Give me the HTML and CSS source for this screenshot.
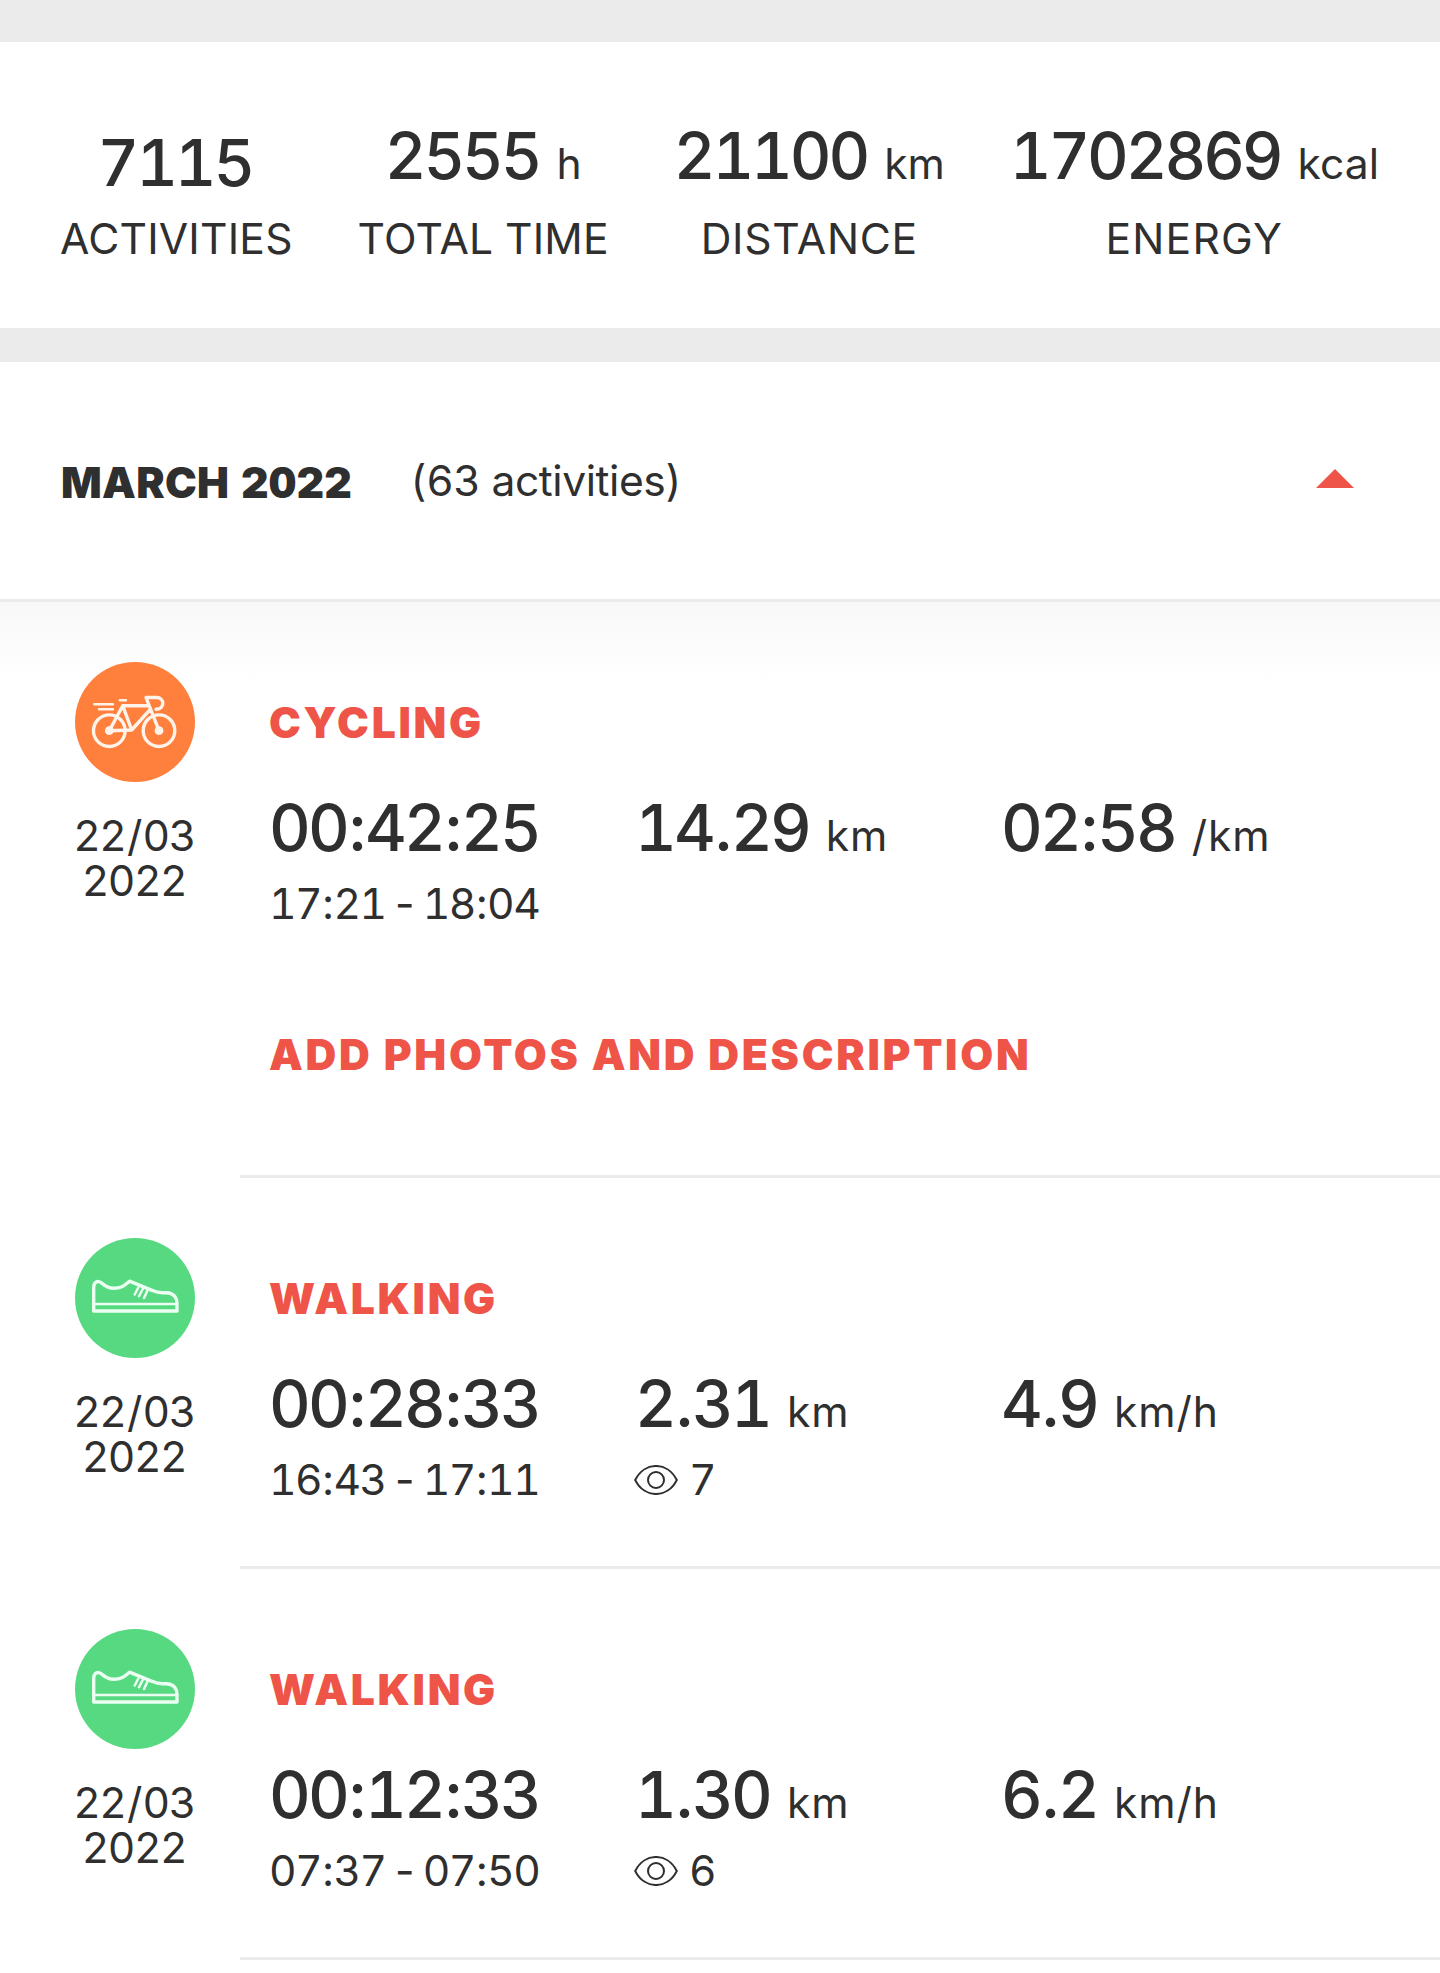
FILE: index.html
```html
<!DOCTYPE html>
<html lang="en">
<head>
<meta charset="utf-8">
<title>Activity history</title>
<link rel="stylesheet" href="styles.css">
</head>
<body>
<svg class="sprite" aria-hidden="true">
  <symbol id="bike" viewBox="0 0 120 120">
    <g fill="none" stroke="#fff3ea" stroke-width="3.4" stroke-linecap="round" stroke-linejoin="round">
      <circle cx="34.3" cy="68.7" r="15.8"/>
      <circle cx="84" cy="68.7" r="15.8"/>
      <path d="M34.3 68.7 47.7 43.7H72.5M47.7 43.7 56.7 68 75 47.6M34.3 68.7 56.7 68M84 68.7 71 35.5H81.5C90 35.5 90 47.3 81 47.3"/>
      <path d="M44.8 38.3H51M19.3 42.3H38M24 47.3H38" stroke-width="2.4"/>
    </g>
    <circle cx="34.3" cy="68.7" r="4.4" fill="#fff3ea"/>
    <circle cx="84" cy="68.7" r="4.4" fill="#fff3ea"/>
  </symbol>
  <symbol id="shoe" viewBox="0 0 120 120">
    <g fill="none" stroke="#eafff1" stroke-width="3.4" stroke-linecap="round" stroke-linejoin="round">
      <path d="M18.7 73V49.5C18.7 45 21 43.3 23.7 43.6C27.5 44 29.5 50.3 38.5 50.3C47.5 50.3 50.5 46.5 54.5 43.2L77 52.3C84.5 55.8 86.5 54.6 91.5 54.7C99.5 55 102 60.5 102 65.5V73Z"/>
      <path d="M18.7 66H102" stroke-width="2.3"/>
      <path d="M63.3 49.5 59.7 56.5M68 50.5 64 58.3M72.5 52.5 69 60" stroke-width="2.5"/>
    </g>
  </symbol>
  <symbol id="eye" viewBox="0 0 44 30">
    <g fill="none" stroke="#2f2f2f" stroke-width="2">
      <path d="M1.2 15C10.5-3.7 33.5-3.7 42.8 15C33.5 33.7 10.5 33.7 1.2 15Z"/>
      <circle cx="22" cy="15" r="8"/>
    </g>
  </symbol>
</svg>

<main class="page">
  <section class="stats">
    <div class="stat stat-plain"><div class="value">7115</div><div class="label">ACTIVITIES</div></div>
    <div class="stat"><div class="value">2555<span class="unit">h</span></div><div class="label">TOTAL TIME</div></div>
    <div class="stat"><div class="value">21100<span class="unit">km</span></div><div class="label label-wide">DISTANCE</div></div>
    <div class="stat"><div class="value">1702869<span class="unit">kcal</span></div><div class="label label-wider">ENERGY</div></div>
  </section>

  <header class="month">
    <h2 class="month-name">MARCH 2022</h2>
    <span class="month-count">(63 activities)</span>
    <svg class="caret" viewBox="0 0 38 19"><path d="M19 0 38 19H0Z" fill="#ee5548"/></svg>
  </header>

  <article class="activity activity-first">
    <div class="side">
      <svg class="badge badge-cycling"><use href="#bike"/></svg>
      <div class="date">22<span class="sep">/</span>03<br>2022</div>
    </div>
    <div class="body">
      <h3 class="title">CYCLING</h3>
      <div class="metrics">
        <div class="value">00<span class="sep">:</span>42<span class="sep">:</span>25</div>
        <div class="value">14<span class="sep">.</span>29<span class="unit">km</span></div>
        <div class="value">02<span class="sep">:</span>58<span class="unit">/km</span></div>
        <div class="sub">17<span class="sep">:</span>21 - 18<span class="sep">:</span>04</div>
      </div>
      <a class="title add">ADD PHOTOS AND DESCRIPTION</a>
    </div>
  </article>

  <article class="activity">
    <div class="side">
      <svg class="badge badge-walking"><use href="#shoe"/></svg>
      <div class="date">22<span class="sep">/</span>03<br>2022</div>
    </div>
    <div class="body">
      <h3 class="title">WALKING</h3>
      <div class="metrics">
        <div class="value">00<span class="sep">:</span>28<span class="sep">:</span>33</div>
        <div class="value">2<span class="sep">.</span>31<span class="unit">km</span></div>
        <div class="value">4<span class="sep">.</span>9<span class="unit">km/h</span></div>
        <div class="sub">16<span class="sep">:</span>43 - 17<span class="sep">:</span>11</div>
        <div class="sub views"><svg class="eye"><use href="#eye"/></svg>7</div>
      </div>
    </div>
  </article>

  <article class="activity">
    <div class="side">
      <svg class="badge badge-walking"><use href="#shoe"/></svg>
      <div class="date">22<span class="sep">/</span>03<br>2022</div>
    </div>
    <div class="body">
      <h3 class="title">WALKING</h3>
      <div class="metrics">
        <div class="value">00<span class="sep">:</span>12<span class="sep">:</span>33</div>
        <div class="value">1<span class="sep">.</span>30<span class="unit">km</span></div>
        <div class="value">6<span class="sep">.</span>2<span class="unit">km/h</span></div>
        <div class="sub">07<span class="sep">:</span>37 - 07<span class="sep">:</span>50</div>
        <div class="sub views"><svg class="eye"><use href="#eye"/></svg>6</div>
      </div>
    </div>
  </article>
</main>
</body>
</html>
```
FILE: styles.css
```css
* { box-sizing: border-box; }
body {
  margin: 0;
  background: #fff;
  color: #2f2f2f;
  font: 400 42.6px/45px Inter, "Liberation Sans", sans-serif;
  font-feature-settings: "tnum";
}
h2, h3 { margin: 0; font-size: inherit; }
.sprite { display: none; }
.page { width: 1440px; height: 1973px; overflow: hidden; }

.stats {
  display: flex;
  justify-content: space-between;
  height: 362px;
  padding: 82px 61px 0 60px;
  border-top: 42px solid #ebebeb;
  border-bottom: 34px solid #ebebeb;
}
.stat { text-align: center; white-space: nowrap; }
.stat .label { margin-top: 28px; letter-spacing: 0.2px; }
.stat .label-wide { letter-spacing: 0.7px; }
.stat .label-wider { letter-spacing: 1.2px; }
.stat-plain .value { padding: 7px 3px 0 0; }
.stat-plain .label { margin-top: 21px; }

.value {
  font-size: 64.5px;
  font-weight: 500;
  line-height: 64px;
  letter-spacing: -2.9px;
  white-space: nowrap;
}
.value .sep { margin: 0 1.9px; }
.unit {
  margin-left: 17px;
  font-size: 42.6px;
  font-weight: 400;
  line-height: 42px;
  letter-spacing: 0.9px;
}
.stats .value { letter-spacing: -3.1px; }
.stats .unit { letter-spacing: 0; }

.month {
  display: flex;
  align-items: flex-start;
  height: 240px;
  padding: 98px 86px 0 61px;
  border-bottom: 3px solid #ebebeb;
}
.month-name { width: 289px; font-weight: 900; letter-spacing: 0.3px; white-space: nowrap; }
.month-count { flex: 1; margin: -2px 0 0 60px; letter-spacing: -0.45px; }
.caret { width: 38px; height: 19px; margin-top: 9px; }

.activity { display: flex; height: 391px; }
.activity-first {
  height: 576px;
  background: linear-gradient(#f8f8f8, #fff 80px);
}
.side {
  display: flex;
  flex-direction: column;
  align-items: center;
  width: 240px;
  padding: 60px 0 0 30px;
}
.badge { width: 120px; height: 120px; border-radius: 50%; }
.badge-cycling { background: #ff7f3d; }
.badge-walking { background: #57d982; }
.date { margin: 31px 2px 0 0; text-align: center; letter-spacing: -1.5px; }
.date .sep, .sub .sep { margin: 0 1.1px; }
.date .sep { margin: 0 1.7px; }
.body {
  flex: 1;
  padding: 98px 0 0 29px;
  border-bottom: 3px solid #ebebeb;
}
.title { display: block; color: #ee5548; font-weight: 900; letter-spacing: 2.7px; word-spacing: -3px; }
.metrics {
  display: grid;
  grid-template-columns: 366px 366px 1fr;
  row-gap: 21px;
  margin-top: 51px;
}
.sub { letter-spacing: -1.5px; word-spacing: -4.5px; }
.add { margin-top: 106px; }
.views { display: flex; align-items: center; gap: 11px; }
.eye { width: 44px; height: 30px; margin-left: -1px; }
```
